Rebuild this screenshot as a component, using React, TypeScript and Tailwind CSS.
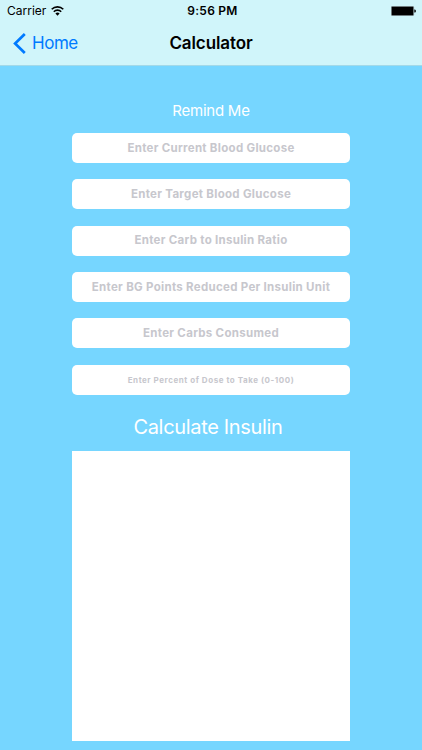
const regular = "text-[11.5px] tracking-[0.3px] pt-px";

const fields = [
  { label: "Enter Current Blood Glucose", cls: regular, gap: "mt-0" },
  { label: "Enter Target Blood Glucose", cls: regular, gap: "mt-4" },
  { label: "Enter Carb to Insulin Ratio", cls: regular, gap: "mt-[16.5px]" },
  { label: "Enter BG Points Reduced Per Insulin Unit", cls: regular, gap: "mt-[16.5px]" },
  { label: "Enter Carbs Consumed", cls: regular, gap: "mt-4" },
  { label: "Enter Percent of Dose to Take (0-100)", cls: "text-[8px] tracking-[0.55px]", gap: "mt-[17px]" },
];

export default function App() {
  return (
    <div className="flex h-[750px] w-[422px] flex-col overflow-hidden bg-[#76d6ff] font-['Inter',sans-serif]">
      <header className="h-[65.5px] border-b border-[#a3d9e8] bg-[#d0f5fa] text-black">
        <div className="grid h-[22px] grid-cols-[1fr_100px_1fr] items-center pl-[7px] pr-[6px] text-xs">
          <div className="flex items-center gap-[5px]">
            <span>Carrier</span>
            <svg className="-mt-px" width="13" height="10" viewBox="0 0 13 10" fill="none" stroke="black" strokeWidth="1.6">
              <path d="M.7 3.3a8.2 8.2 0 0 1 11.6 0M2.8 5.7a5.2 5.2 0 0 1 7.4 0" />
              <path d="M6.5 9.8 4.4 7.5a2.9 2.9 0 0 1 4.2 0Z" fill="black" stroke="none" />
            </svg>
          </div>
          <span className="pl-[2px] text-center font-semibold tracking-[0.25px]">9:56 PM</span>
          <svg className="justify-self-end" width="25" height="10" viewBox="0 0 25 10">
            <rect x=".4" y=".4" width="22.2" height="9.2" rx="1" fill="black" stroke="#747f82" strokeWidth=".8" />
            <path d="M23.3 3.5h.6q1 0 1 1.5t-1 1.5h-.6Z" fill="black" />
          </svg>
        </div>
        <div className="grid h-[43px] grid-cols-3 items-center">
          <div className="flex items-center gap-[6px] pl-[13px] text-[#007aff]">
            <svg className="-mt-px" width="13" height="21" viewBox="0 0 13 21" fill="none" stroke="currentColor" strokeWidth="2.7"><path d="m11.8 1-9.7 9.5 9.7 9.5" /></svg>
            <span className="text-[17px] tracking-[-0.45px]">Home</span>
          </div>
          <span className="text-center text-[17px] font-semibold tracking-[-0.1px]">Calculator</span>
        </div>
      </header>
      <main className="flex flex-col pl-[72px]">
        <div className="mt-[33.5px] h-6 w-[278px] text-center text-[15px] leading-6 tracking-[-0.25px] text-white">Remind Me</div>
        <div className="mt-[10px]">
          {fields.map((f) => (
            <div key={f.label} className={`flex h-[30px] w-[278px] items-center justify-center rounded-[5px] bg-white font-bold text-[#c7c7cd] ${f.cls} ${f.gap}`}>{f.label}</div>
          ))}
        </div>
        <div className="mt-4 h-8 w-[272px] text-center text-xl leading-8 tracking-[-0.33px] text-white">Calculate Insulin</div>
        <div className="mt-2 h-[290px] w-[278px] bg-white" />
      </main>
    </div>
  );
}
